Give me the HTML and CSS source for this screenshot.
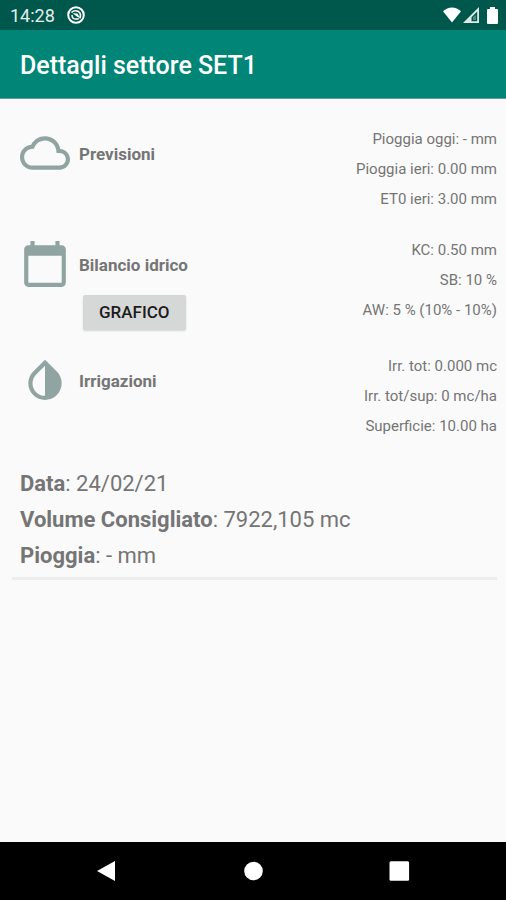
FILE: index.html
```html
<!DOCTYPE html>
<html lang="it">
<head>
<meta charset="utf-8">
<meta name="viewport" content="width=device-width, initial-scale=1">
<title>Dettagli settore SET1</title>
<link rel="stylesheet" href="styles.css">
</head>
<body>
<div class="status-bar">
  <time class="clock">14:28</time>
  <svg class="notice" viewBox="0 0 18 18" aria-hidden="true">
    <circle cx="9" cy="9" r="7.800" fill="none" stroke="currentColor" stroke-width="2"/>
    <path d="M4.500 6.500C6.500 4.300 10.800 4 12.800 6.800c1 1.600.9 3.700 0 5.500M5 9c0 2.400 1.500 4.100 4 4.100 1 0 2-.2 2.700-.6" fill="none" stroke="currentColor" stroke-width="1.500"/>
    <path d="M5.500 7.200l5 .3 2.500 4.800-3.500-2z" fill="currentColor"/>
  </svg>
  <div class="signals">
    <svg class="wifi" viewBox="0 0 18 16" aria-hidden="true"><path d="M0 4.200C5-.9 13-.9 18 4.200L9 15.500z" fill="currentColor"/></svg>
    <svg class="cell" viewBox="0 0 16 16" aria-hidden="true"><path fill-rule="evenodd" d="M0 16L16 0v16zM8.500 14.200h5.700V4.500L8.500 10.200z" fill="currentColor"/><path d="M10 10l3-2v5h-3z" fill="currentColor" opacity=".35"/></svg>
    <svg class="battery" viewBox="0 0 11 17" aria-hidden="true"><path d="M3 0h5v2h2q1 0 1 1v13q0 1-1 1H1q-1 0-1-1V3q0-1 1-1h2z" fill="currentColor"/></svg>
  </div>
</div>
<header class="app-bar"><h1>Dettagli settore SET1</h1></header>
<main>
  <section class="row">
    <svg class="icon" viewBox="0 0 24 24" aria-hidden="true"><path d="M19.350 10.040C18.670 6.590 15.640 4 12 4 9.110 4 6.600 5.640 5.350 8.040 2.340 8.360 0 10.910 0 14c0 3.310 2.690 6 6 6h13c2.760 0 5-2.240 5-5 0-2.640-2.050-4.780-4.650-4.960zM19 18H6c-2.210 0-4-1.790-4-4s1.790-4 4-4h.710C7.370 7.690 9.480 6 12 6c3.040 0 5.500 2.460 5.500 5.500v.5H19c1.660 0 3 1.340 3 3s-1.340 3-3 3z"/></svg>
    <div class="heading"><h2>Previsioni</h2></div>
    <ul class="values">
      <li>Pioggia oggi: - mm</li>
      <li>Pioggia ieri: 0.00 mm</li>
      <li>ET0 ieri: 3.00 mm</li>
    </ul>
  </section>
  <section class="row">
    <svg class="icon" viewBox="0 0 24 24" aria-hidden="true"><path d="M20 3h-1V1h-2v2H7V1H5v2H4c-1.100 0-2 .9-2 2v16c0 1.100.9 2 2 2h16c1.100 0 2-.9 2-2V5c0-1.100-.9-2-2-2zm0 18H4V8h16v13z"/></svg>
    <div class="heading"><h2>Bilancio idrico</h2><button class="button" type="button">GRAFICO</button></div>
    <ul class="values">
      <li>KC: 0.50 mm</li>
      <li>SB: 10 %</li>
      <li>AW: 5 % (10% - 10%)</li>
    </ul>
  </section>
  <section class="row">
    <svg class="icon" viewBox="0 0 24 24" aria-hidden="true"><path d="M17.660 7.930L12 2.270 6.340 7.930c-3.120 3.120-3.120 8.190 0 11.310C7.900 20.800 9.950 21.580 12 21.580s4.100-.78 5.660-2.340c3.120-3.120 3.120-8.190 0-11.310zM12 19.590c-1.600 0-3.110-.62-4.240-1.760C6.620 16.690 6 15.190 6 13.590s.62-3.110 1.760-4.240L12 5.100v14.490z"/></svg>
    <div class="heading"><h2>Irrigazioni</h2></div>
    <ul class="values">
      <li>Irr. tot: 0.000 mc</li>
      <li>Irr. tot/sup: 0 mc/ha</li>
      <li>Superficie: 10.00 ha</li>
    </ul>
  </section>
  <section class="advice">
    <p><strong>Data</strong>: 24/02/21</p>
    <p><strong>Volume Consigliato</strong>: 7922,105 mc</p>
    <p><strong>Pioggia</strong>: - mm</p>
  </section>
</main>
<nav class="nav-bar">
  <button type="button" aria-label="Indietro"><svg viewBox="0 0 22 22" aria-hidden="true"><path d="M1 11L19 1v20z"/></svg></button>
  <button type="button" aria-label="Home"><svg viewBox="0 0 22 22" aria-hidden="true"><circle cx="11.500" cy="11" r="9.300"/></svg></button>
  <button type="button" aria-label="Recenti"><svg viewBox="0 0 22 22" aria-hidden="true"><rect x="1.500" y="1.200" width="19.600" height="19.600" rx="1.500"/></svg></button>
</nav>
</body>
</html>
```

FILE: styles.css
```css
* { box-sizing: border-box; }
body {
  margin: 0;
  min-height: 100vh;
  display: flex;
  flex-direction: column;
  background: #fafafa;
  color: #757575;
  font-family: Roboto, "Liberation Sans", sans-serif;
}
h1, h2, p, ul { margin: 0; padding: 0; }
ul { list-style: none; }
svg { display: block; flex: none; }

.status-bar {
  height: 30px;
  display: flex;
  align-items: center;
  padding: 0 8px 0 10px;
  background: #00574b;
  color: #fff;
}
.clock { padding-top: 2px; font-size: 18px; line-height: 28px; color: #e4eeec; }
.notice { width: 18px; height: 18px; margin-left: 12px; }
.signals { display: flex; align-items: center; margin-left: auto; }
.wifi { width: 18px; height: 16px; }
.cell { width: 16px; height: 16px; margin-left: 2px; color: #dfeae8; }
.battery { width: 11px; height: 17px; margin-left: 8px; }

.app-bar {
  height: 69px;
  display: flex;
  align-items: center;
  padding: 4px 20px 0;
  background: #008577;
  border-bottom: 1px solid #5f9f98;
}
.app-bar h1 { color: #fff; font-size: 25px; font-weight: 500; line-height: 32px; }

main {
  flex: 1;
  padding: 25px 9px 0 12px;
}
.row {
  display: flex;
  align-items: flex-start;
  padding-left: 8px;
  margin-bottom: 21px;
}
.icon { width: 50px; height: 50px; margin-top: 4px; fill: #90a4a1; }
.heading { margin-left: 9px; }
.heading h2 { padding-top: 20px; font-size: 17px; font-weight: 700; line-height: 20px; }
.button {
  display: block;
  margin: 20px 0 0 4px;
  height: 35px;
  padding: 0 16px;
  border: 0;
  border-radius: 2px;
  background: #d6d7d7;
  box-shadow: 0 1px 2px rgba(0, 0, 0, 0.15);
  color: #1c1c1c;
  font: 500 17px/35px Roboto, "Liberation Sans", sans-serif;
}
.values { margin-left: auto; text-align: right; font-size: 15px; line-height: 30px; }

.advice {
  padding: 4px 8px 3px;
  border-bottom: 3px solid #ededed;
  font-size: 22px;
  line-height: 36px;
}
.advice strong { font-weight: 700; }

.nav-bar {
  height: 58px;
  display: flex;
  justify-content: center;
  gap: 102px;
  align-items: center;
  background: #000;
}
.nav-bar button { width: 44px; padding: 11px; border: 0; background: none; }
.nav-bar svg { width: 22px; height: 22px; fill: #fff; }
```
